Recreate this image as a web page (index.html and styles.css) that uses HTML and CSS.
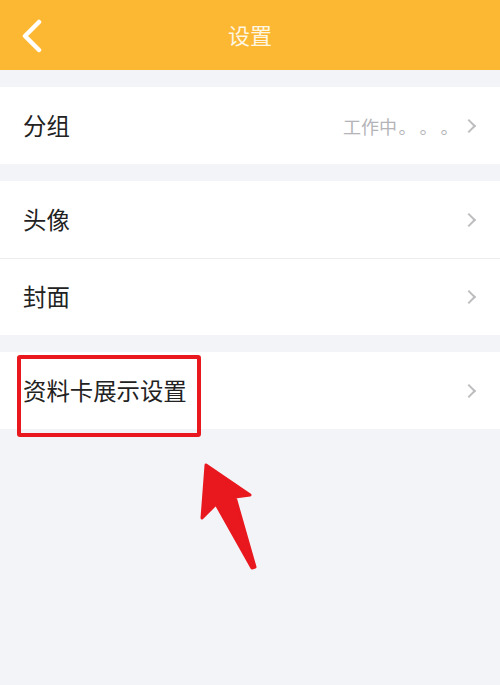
FILE: index.html
```html
<!DOCTYPE html>
<html lang="zh">
<head>
<meta charset="utf-8">
<link rel="stylesheet" href="styles.css">
</head>
<body>
<div class="page">
  <header class="bar">
    <svg class="back" width="24" height="34" viewBox="0 0 24 34"><path d="M19 3 L5 17 L19 31" fill="none" stroke="#fff" stroke-width="4.5" stroke-linecap="round" stroke-linejoin="round"/></svg>
    <div class="title">设置</div>
  </header>
  <section class="group">
    <div class="row"><span class="label">分组</span><span class="right"><span class="value">工作中<span class="dot">。</span><span class="dot">。</span><span class="dot">。</span></span><span class="chev"></span></span></div>
  </section>
  <section class="group">
    <div class="row"><span class="label">头像</span><span class="chev"></span></div>
    <div class="row"><span class="label">封面</span><span class="chev"></span></div>
  </section>
  <section class="group">
    <div class="row"><span class="label">资料卡展示设置</span><span class="chev"></span></div>
  </section>
  <div class="highlight"></div>
  <svg class="arrow" width="500" height="685" viewBox="0 0 500 685"><polygon points="206,465 250,495 235,497 255,567 252,568 216,504 202,518" fill="#E8181E" stroke="#E8181E" stroke-width="3" stroke-linejoin="round"/></svg>
</div>
</body>
</html>
```
FILE: styles.css
```css
* { box-sizing: border-box; }
html, body { margin: 0; padding: 0; }
body {
  background: #F3F4F8;
  font-family: "Noto Sans CJK SC", "Noto Sans", sans-serif;
  width: 500px;
  height: 685px;
  overflow: hidden;
}
.page { position: relative; width: 500px; height: 685px; }
.bar {
  height: 70px;
  background: #FCB833;
  display: flex;
  align-items: center;
  justify-content: center;
  position: relative;
}
.back { position: absolute; left: 20px; top: 19px; }
.title { color: #FFF6E2; font-size: 22px; line-height: 1; margin-top: -2px; }
.group { background: #fff; margin-top: 17px; }
.row {
  height: 77px;
  display: flex;
  align-items: center;
  justify-content: space-between;
  padding: 0 22px 0 23px;
  border-top: 1px solid #ECECEF;
}
.row:first-child { border-top: none; }
.label { font-size: 23.4px; color: #222; line-height: 1; }
.right { display: flex; align-items: center; }
.value {
  font-size: 18px;
  color: #B4B4B8;
  margin-right: 4px;
  line-height: 1;
  white-space: nowrap;
}
.dot { display: inline-block; width: 21px; text-align: center; }
.chev {
  width: 10px; height: 10px;
  border-top: 2px solid #BDBDC0;
  border-right: 2px solid #BDBDC0;
  transform: rotate(45deg);
  margin-right: 4px;
}
.highlight {
  position: absolute;
  left: 17px; top: 355px;
  width: 184px; height: 82px;
  border: 4px solid #E8181E;
  border-radius: 3px;
}
.arrow { position: absolute; left: 0; top: 0; }
```
